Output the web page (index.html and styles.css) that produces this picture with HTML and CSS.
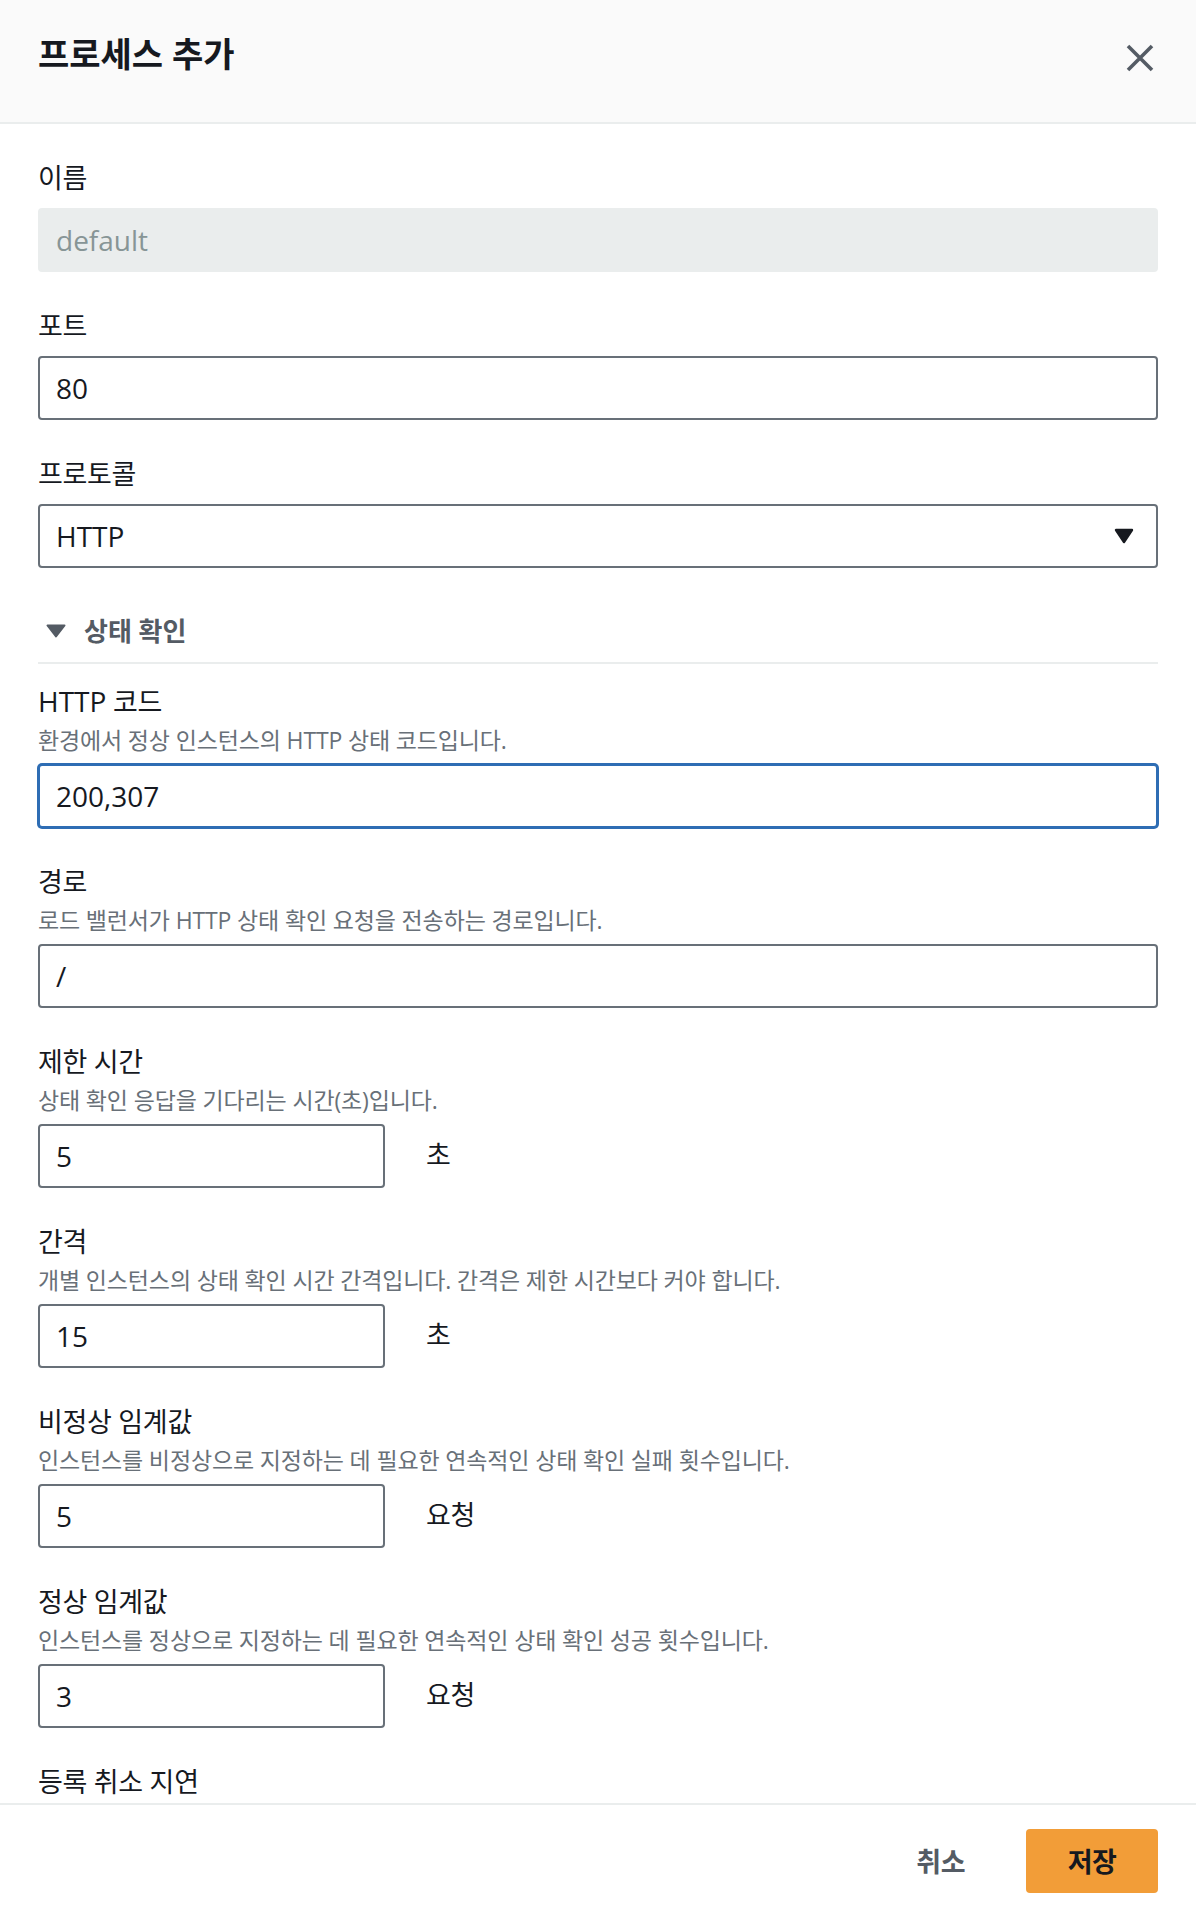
FILE: index.html
```html
<!DOCTYPE html>
<html lang="ko">
<head>
<meta charset="utf-8">
<title>프로세스 추가</title>
<link rel="stylesheet" href="styles.css">
</head>
<body>
<div class="modal">
  <header class="modal-header">
    <h1 class="modal-title">프로세스 추가</h1>
    <button class="close-btn" type="button" aria-label="닫기">
      <svg width="28" height="28" viewBox="0 0 28 28"><path d="M2 2 L26 26 M26 2 L2 26" stroke="#545b64" stroke-width="3.6" fill="none"/></svg>
    </button>
  </header>

  <main class="modal-body">
    <div class="field">
      <label class="label">이름</label>
      <input class="input input-disabled" type="text" value="default" disabled>
    </div>

    <div class="field">
      <label class="label">포트</label>
      <input class="input" type="text" value="80">
    </div>

    <div class="field">
      <label class="label">프로토콜</label>
      <div class="select">
        <span class="select-value">HTTP</span>
        <svg class="select-arrow" width="20" height="16" viewBox="0 0 20 16"><path d="M2 2 H18 L10 14 Z" fill="#16191f" stroke="#16191f" stroke-width="2.4" stroke-linejoin="round"/></svg>
      </div>
    </div>

    <section class="section">
      <div class="section-header">
        <svg class="section-caret" width="20" height="14" viewBox="0 0 20 14"><path d="M1.5 1.5 H18.5 L10 12.5 Z" fill="#545b64" stroke="#545b64" stroke-width="2" stroke-linejoin="round"/></svg>
        <span class="section-title">상태 확인</span>
      </div>

      <div class="section-fields">
        <div class="field has-desc">
          <label class="label"><span class="en">HTTP</span> 코드</label>
          <div class="desc">환경에서 정상 인스턴스의 HTTP 상태 코드입니다.</div>
          <input class="input input-focus" type="text" value="200,307">
        </div>

        <div class="field has-desc">
          <label class="label">경로</label>
          <div class="desc">로드 밸런서가 HTTP 상태 확인 요청을 전송하는 경로입니다.</div>
          <input class="input" type="text" value="/">
        </div>

        <div class="field has-desc">
          <label class="label">제한 시간</label>
          <div class="desc">상태 확인 응답을 기다리는 시간(초)입니다.</div>
          <div class="unit-row">
            <input class="input input-small" type="text" value="5">
            <span class="unit">초</span>
          </div>
        </div>

        <div class="field has-desc">
          <label class="label">간격</label>
          <div class="desc">개별 인스턴스의 상태 확인 시간 간격입니다. 간격은 제한 시간보다 커야 합니다.</div>
          <div class="unit-row">
            <input class="input input-small" type="text" value="15">
            <span class="unit">초</span>
          </div>
        </div>

        <div class="field has-desc">
          <label class="label">비정상 임계값</label>
          <div class="desc">인스턴스를 비정상으로 지정하는 데 필요한 연속적인 상태 확인 실패 횟수입니다.</div>
          <div class="unit-row">
            <input class="input input-small" type="text" value="5">
            <span class="unit">요청</span>
          </div>
        </div>

        <div class="field has-desc">
          <label class="label">정상 임계값</label>
          <div class="desc">인스턴스를 정상으로 지정하는 데 필요한 연속적인 상태 확인 성공 횟수입니다.</div>
          <div class="unit-row">
            <input class="input input-small" type="text" value="3">
            <span class="unit">요청</span>
          </div>
        </div>

        <div class="field">
          <label class="label">등록 취소 지연</label>
        </div>
      </div>
    </section>
  </main>

  <footer class="modal-footer">
    <button class="btn-link" type="button">취소</button>
    <button class="btn-primary" type="button">저장</button>
  </footer>
</div>
</body>
</html>
```

FILE: styles.css
```css
* {
  box-sizing: border-box;
}

html, body {
  margin: 0;
  padding: 0;
  background: #ffffff;
}

body {
  font-family: "Open Sans", "Noto Sans CJK KR", sans-serif;
  color: #16191f;
}

.modal {
  width: 1196px;
  height: 1916px;
  display: flex;
  flex-direction: column;
  overflow: hidden;
  background: #ffffff;
}

.modal-header {
  flex: 0 0 124px;
  height: 124px;
  display: flex;
  justify-content: space-between;
  align-items: flex-start;
  padding: 32px 42px 0 38px;
  background: #fafafa;
  border-bottom: 2px solid #eaeded;
}

.modal-title {
  margin: 0;
  font-size: 34px;
  line-height: 44px;
  font-weight: 700;
  letter-spacing: 0;
  color: #16191f;
}

.close-btn {
  margin-top: 12px;
  width: 28px;
  height: 28px;
  padding: 0;
  border: 0;
  background: transparent;
  display: block;
}

.close-btn svg {
  display: block;
}

.modal-body {
  flex: 1 1 auto;
  overflow: hidden;
  padding: 36px 38px 0 38px;
  display: flex;
  flex-direction: column;
  gap: 36px;
}

.field {
  display: flex;
  flex-direction: column;
}

.label {
  font-size: 27px;
  line-height: 36px;
  letter-spacing: -0.3px;
  color: #16191f;
  margin-bottom: 12px;
}

.label .en {
  font-size: 28px;
  letter-spacing: 0;
}

.field.has-desc .label {
  margin-bottom: 5px;
}

.desc {
  font-size: 23px;
  line-height: 30px;
  letter-spacing: -0.15px;
  color: #687078;
  margin-bottom: 9px;
}

.input {
  display: block;
  width: 100%;
  height: 64px;
  margin: 0;
  padding: 0 16px;
  font-family: "Open Sans", "Noto Sans CJK KR", sans-serif;
  font-size: 28px;
  color: #16191f;
  background: #ffffff;
  border: 2px solid #687078;
  border-radius: 4px;
  outline: none;
}

.input-disabled {
  background: #eaeded;
  border-color: #eaeded;
  color: #879596;
  -webkit-text-fill-color: #879596;
}

.input-focus {
  border-color: #2e6db4;
  box-shadow: 0 0 0 1px #2e6db4;
}

.select {
  height: 64px;
  display: flex;
  align-items: center;
  justify-content: space-between;
  padding: 0 22px 0 16px;
  border: 2px solid #687078;
  border-radius: 4px;
  font-size: 28px;
  color: #16191f;
}

.select-arrow {
  display: block;
}

.section {
  margin-top: 9px;
  display: flex;
  flex-direction: column;
}

.section-header {
  display: flex;
  align-items: center;
  padding: 0 0 13px 8px;
  border-bottom: 2px solid #eaeded;
}

.section-caret {
  display: block;
  margin-right: 18px;
}

.section-title {
  font-size: 26px;
  line-height: 36px;
  font-weight: 700;
  letter-spacing: 0;
  color: #545b64;
}

.section-fields {
  display: flex;
  flex-direction: column;
  gap: 36px;
  padding-top: 19px;
}

.unit-row {
  display: flex;
  align-items: center;
  gap: 41px;
}

.input-small {
  width: 347px;
  flex: 0 0 347px;
}

.unit {
  font-size: 27px;
  letter-spacing: -0.3px;
  color: #16191f;
  margin-bottom: 5px;
}

.modal-footer {
  flex: 0 0 113px;
  height: 113px;
  display: flex;
  justify-content: flex-end;
  align-items: center;
  gap: 61px;
  padding: 0 38px 0 0;
  border-top: 2px solid #eaeded;
  background: #ffffff;
}

.btn-link {
  padding: 0;
  border: 0;
  background: transparent;
  font-family: "Open Sans", "Noto Sans CJK KR", sans-serif;
  font-size: 27px;
  font-weight: 700;
  letter-spacing: -0.5px;
  color: #545b64;
}

.btn-primary {
  width: 132px;
  height: 64px;
  padding: 0;
  border: 0;
  border-radius: 4px;
  background: #f29d38;
  font-family: "Open Sans", "Noto Sans CJK KR", sans-serif;
  font-size: 27px;
  font-weight: 700;
  letter-spacing: -0.5px;
  color: #16191f;
}
```
